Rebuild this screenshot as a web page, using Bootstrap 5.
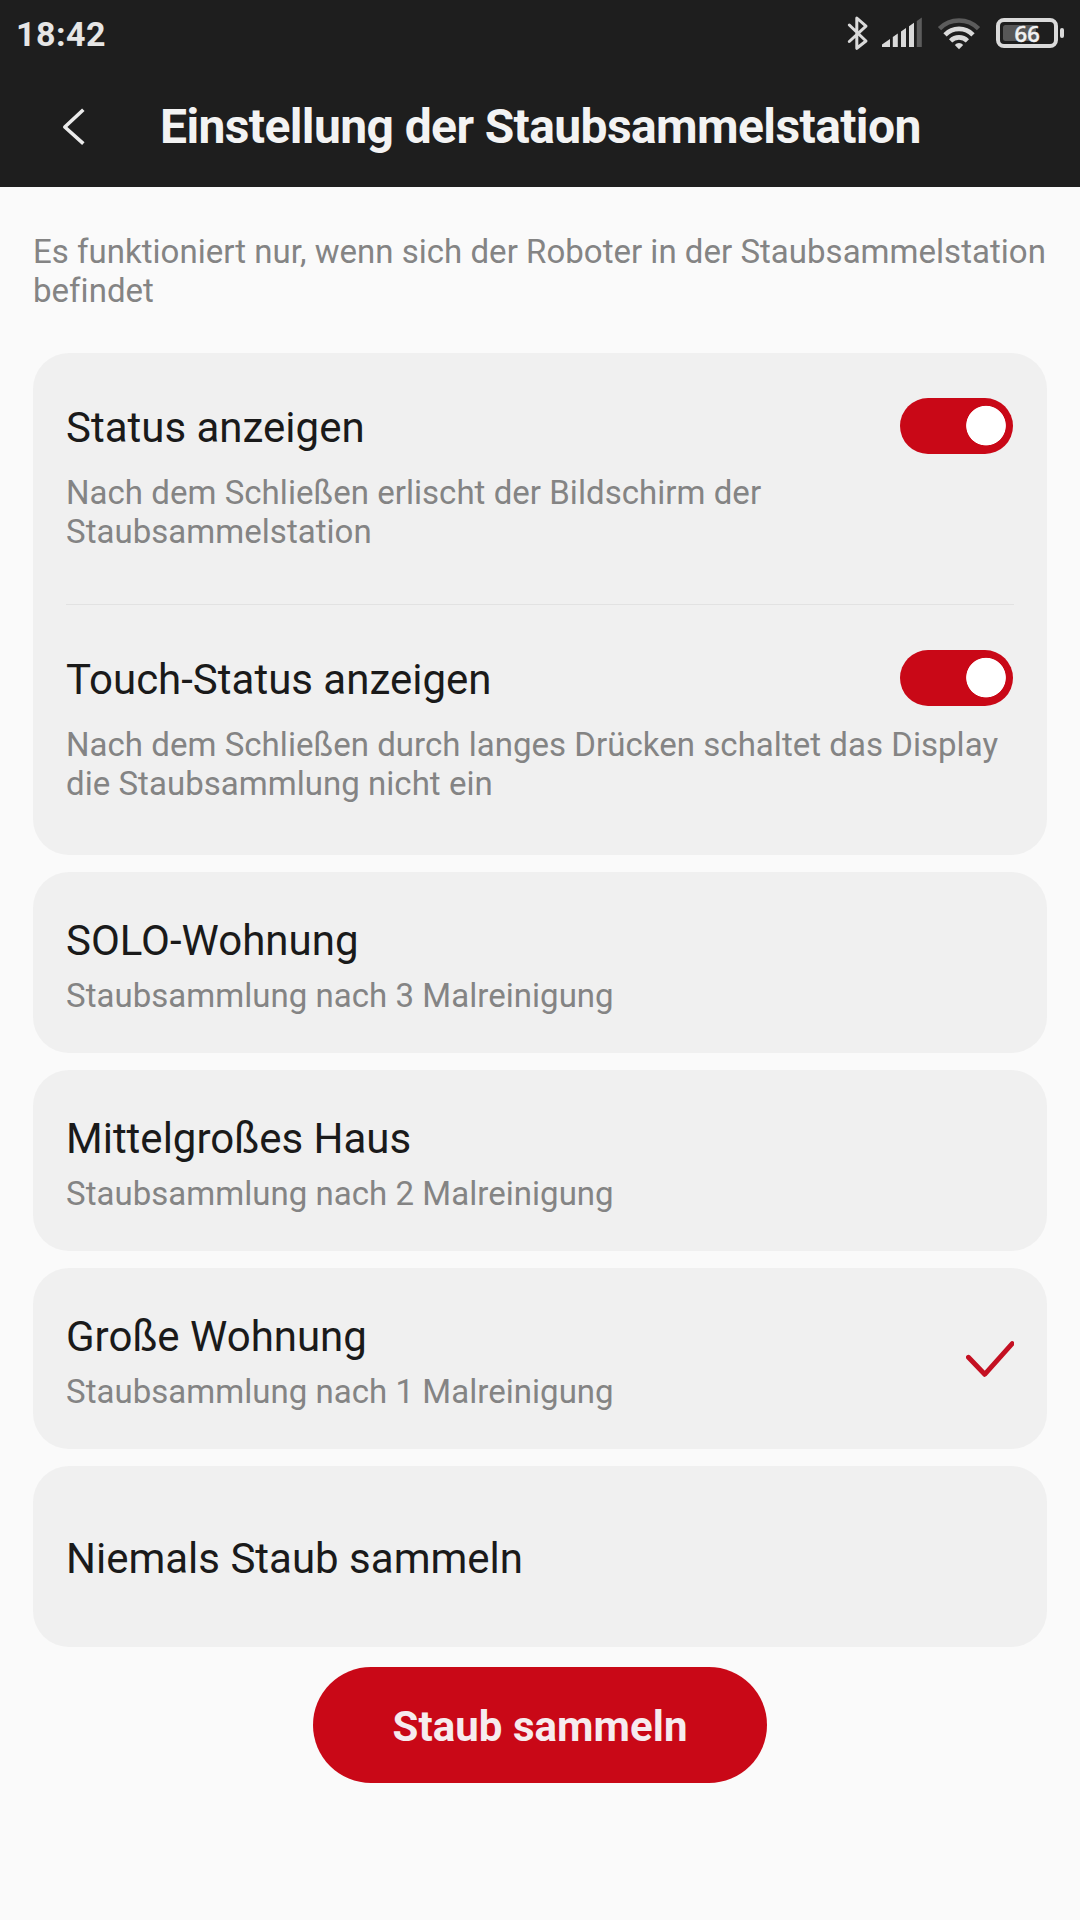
<!DOCTYPE html>
<html lang="de">
<head>
<meta charset="utf-8">
<meta name="viewport" content="width=device-width, initial-scale=1">
<title>Einstellung der Staubsammelstation</title>
<link href="https://cdn.jsdelivr.net/npm/bootstrap@5.3.0/dist/css/bootstrap.min.css" rel="stylesheet">
<style>
  body { font-family: Roboto, sans-serif; background: #fafafa; color: #1a1a1a; min-height: 1920px; }
  svg { display: block; flex: none; }
  .app-head { background: #1e1e1e; height: 187px; }
  .status-row { height: 66px; padding: 0 15px 0 16px; }
  .clock { font-size: 34px; line-height: 40px; padding-top: 2px; font-weight: 700; color: #e6e6e6; letter-spacing: .5px; }
  .title-row { height: 121px; padding-left: 54px; }
  .back-btn { width: 40px; height: 60px; }
  .page-title { font-size: 48px; line-height: 56px; font-weight: 700; letter-spacing: -.61px; color: #f3f3f3; margin: 0 0 0 66px; padding-top: 1px; white-space: nowrap; }
  .content { padding: 45px 33px 0; }
  .hint { font-size: 33px; line-height: 39px; letter-spacing: .035px; color: #848484; margin: 0; }
  .intro { margin-bottom: 43px; white-space: nowrap; }
  .intro span { letter-spacing: .02px; }
  .panel { background: #f0f0f0; border: 0; border-radius: 36px; padding: 0 33px; }
  .panel + .panel { margin-top: 17px; }
  .panel-switches { height: 502px; }
  .item-title { font-size: 42px; line-height: 50px; font-weight: 400; margin: 0; color: #1a1a1a; }
  .switch-item { height: 251px; padding-top: 50px; }
  .switch-item + .switch-item { border-top: 1px solid #e2e2e2; }
  .switch-item .hint { margin-top: 20px; white-space: nowrap; }
  .toggle.form-check-input, .toggle.form-check-input:checked {
    width: 113px; height: 56px; margin: -5px 1px 0 0; border: 0; border-radius: 28px; float: none;
    background: radial-gradient(circle at 86px 27.6px, #fff 19.4px, #c90817 20.2px);
  }
  .switch-head { height: 50px; }
  .option { height: 181px; }
  .option .hint { margin-top: 10px; }
  .option-text { padding-top: 5px; }
  .collect { width: 454px; height: 116px; margin-top: 20px; padding: 3px 0 0; border: 0; font-size: 42px; line-height: 50px; font-weight: 700; letter-spacing: .05px; background: #c90817; color: #f6ebee; }
</style>
</head>
<body>
<header class="app-head">
  <div class="status-row d-flex align-items-center justify-content-between">
    <span class="clock">18:42</span>
    <svg width="220" height="40" viewBox="845 13 220 40">
      <path d="M849.3 25 866 41 856.800 48.300V18L866 26.200 849.300 41.500" fill="none" stroke="#dadada" stroke-width="3" stroke-linejoin="round" stroke-linecap="round"/>
      <g fill="#dadada">
        <path d="M882 47v-2.500l8-5.500V47zM892.800 47V37l5-3.500V47zM901 47V31.500l5-3.500V47zM909 47V26.300l5-3.500V47z"/>
        <path d="M916.800 47V21l5-3.500V47z" fill="#5c5c5c"/>
      </g>
      <g fill="none" stroke="#dadada" stroke-width="4.600">
        <path d="M939.500 28.600A27.500 27.500 0 0 1 978.500 28.600" stroke="#5c5c5c"/>
        <path d="M945 34.800A19.500 19.500 0 0 1 973 34.800"/>
        <path d="M950.600 40.800A12 12 0 0 1 967.400 40.800"/>
      </g>
      <path d="M959 49.300l-4.200-4.300a5.400 5.400 0 0 1 8.400 0z" fill="#dadada"/>
      <rect x="1003" y="25" width="33" height="16" rx="2.500" fill="#575757"/>
      <rect x="998" y="20" width="58" height="26" rx="6" fill="none" stroke="#dadada" stroke-width="4"/>
      <rect x="1060" y="28" width="4" height="10" rx="2" fill="#dadada"/>
      <text x="1027.200" y="41.600" text-anchor="middle" font-family="'Noto Sans', sans-serif" font-size="22" font-weight="500" fill="#f2f2f2" stroke="#f2f2f2" stroke-width=".5">66</text>
    </svg>
  </div>
  <div class="title-row d-flex align-items-center">
    <a href="#" class="back-btn d-flex align-items-center justify-content-center" aria-label="Zurück">
      <svg width="40" height="60" viewBox="54 97 40 60"><path d="M82 111 64.800 127 82 142.500" fill="none" stroke="#ebebeb" stroke-width="3.600" stroke-linecap="square" stroke-linejoin="round"/></svg>
    </a>
    <h1 class="page-title">Einstellung der Staubsammelstation</h1>
  </div>
</header>

<main class="content d-flex flex-column">
  <p class="hint intro"><span>Es funktioniert nur, wenn sich der Roboter in der Staubsammelstation</span><br>befindet</p>

  <section class="card panel panel-switches">
    <div class="switch-item">
      <div class="switch-head d-flex align-items-start justify-content-between">
        <h2 class="item-title">Status anzeigen</h2>
        <input class="form-check-input toggle" type="checkbox" role="switch" aria-label="Status anzeigen" checked>
      </div>
      <p class="hint">Nach dem Schließen erlischt der Bildschirm der<br>Staubsammelstation</p>
    </div>
    <div class="switch-item">
      <div class="switch-head d-flex align-items-start justify-content-between">
        <h2 class="item-title">Touch-Status anzeigen</h2>
        <input class="form-check-input toggle" type="checkbox" role="switch" aria-label="Touch-Status anzeigen" checked>
      </div>
      <p class="hint">Nach dem Schließen durch langes Drücken schaltet das Display<br>die Staubsammlung nicht ein</p>
    </div>
  </section>

  <section class="card panel option flex-row align-items-center justify-content-between">
    <div class="option-text">
      <h2 class="item-title">SOLO-Wohnung</h2>
      <p class="hint">Staubsammlung nach 3 Malreinigung</p>
    </div>
  </section>
  <section class="card panel option flex-row align-items-center justify-content-between">
    <div class="option-text">
      <h2 class="item-title">Mittelgroßes Haus</h2>
      <p class="hint">Staubsammlung nach 2 Malreinigung</p>
    </div>
  </section>
  <section class="card panel option flex-row align-items-center justify-content-between">
    <div class="option-text">
      <h2 class="item-title">Große Wohnung</h2>
      <p class="hint">Staubsammlung nach 1 Malreinigung</p>
    </div>
    <svg width="48" height="36" viewBox="0 0 48 36"><path d="M2.400 16.300 18.700 33.300 46.200 2.600" fill="none" stroke="#c41022" stroke-width="4.900" stroke-linecap="round" stroke-linejoin="round"/></svg>
  </section>
  <section class="card panel option flex-row align-items-center justify-content-between">
    <div class="option-text">
      <h2 class="item-title">Niemals Staub sammeln</h2>
    </div>
  </section>

  <button type="button" class="btn rounded-pill collect align-self-center">Staub sammeln</button>
</main>
<script src="https://cdn.jsdelivr.net/npm/bootstrap@5.3.0/dist/js/bootstrap.bundle.min.js"></script>
</body>
</html>
